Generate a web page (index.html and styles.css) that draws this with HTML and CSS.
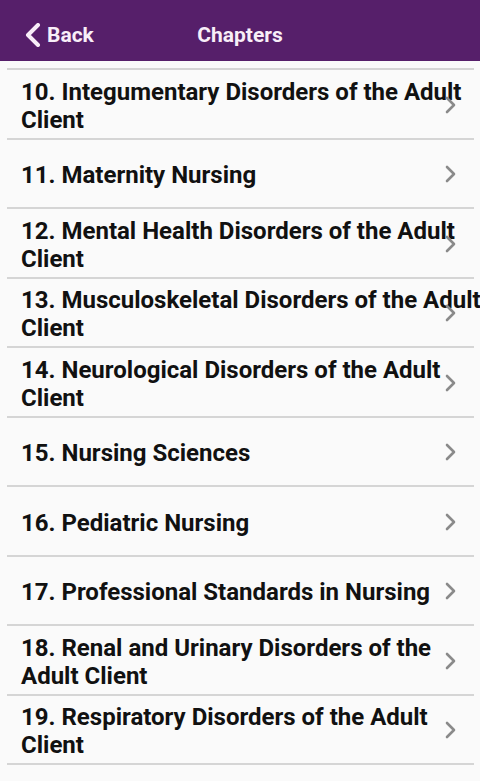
FILE: index.html
```html
<!DOCTYPE html>
<html lang="en">
<head>
<meta charset="utf-8">
<title>Chapters</title>
<link rel="stylesheet" href="styles.css">
</head>
<body>
<header class="topbar">
  <a class="back" href="#">
    <svg class="back-icon" width="16" height="24" viewBox="0 0 16 24"><polyline points="13,2 3,12 13,22" fill="none" stroke="currentColor" stroke-width="4" stroke-linecap="round" stroke-linejoin="round"/></svg>
    <span>Back</span>
  </a>
  <h1 class="title">Chapters</h1>
  <span class="spacer"></span>
</header>
<main class="list-wrap">
  <ul class="chapters">
    <li class="row"><span class="label">10. Integumentary Disorders of the Adult Client</span><svg class="chev" width="12" height="18" viewBox="0 0 12 18"><polyline points="2,2 9,9 2,16" fill="none" stroke="currentColor" stroke-width="2.6" stroke-linecap="round" stroke-linejoin="round"/></svg></li>
    <li class="row"><span class="label">11. Maternity Nursing</span><svg class="chev" width="12" height="18" viewBox="0 0 12 18"><polyline points="2,2 9,9 2,16" fill="none" stroke="currentColor" stroke-width="2.6" stroke-linecap="round" stroke-linejoin="round"/></svg></li>
    <li class="row"><span class="label">12. Mental Health Disorders of the Adult Client</span><svg class="chev" width="12" height="18" viewBox="0 0 12 18"><polyline points="2,2 9,9 2,16" fill="none" stroke="currentColor" stroke-width="2.6" stroke-linecap="round" stroke-linejoin="round"/></svg></li>
    <li class="row"><span class="label">13. Musculoskeletal Disorders of the Adult Client</span><svg class="chev" width="12" height="18" viewBox="0 0 12 18"><polyline points="2,2 9,9 2,16" fill="none" stroke="currentColor" stroke-width="2.6" stroke-linecap="round" stroke-linejoin="round"/></svg></li>
    <li class="row"><span class="label">14. Neurological Disorders of the Adult Client</span><svg class="chev" width="12" height="18" viewBox="0 0 12 18"><polyline points="2,2 9,9 2,16" fill="none" stroke="currentColor" stroke-width="2.6" stroke-linecap="round" stroke-linejoin="round"/></svg></li>
    <li class="row"><span class="label">15. Nursing Sciences</span><svg class="chev" width="12" height="18" viewBox="0 0 12 18"><polyline points="2,2 9,9 2,16" fill="none" stroke="currentColor" stroke-width="2.6" stroke-linecap="round" stroke-linejoin="round"/></svg></li>
    <li class="row"><span class="label">16. Pediatric Nursing</span><svg class="chev" width="12" height="18" viewBox="0 0 12 18"><polyline points="2,2 9,9 2,16" fill="none" stroke="currentColor" stroke-width="2.6" stroke-linecap="round" stroke-linejoin="round"/></svg></li>
    <li class="row"><span class="label">17. Professional Standards in Nursing</span><svg class="chev" width="12" height="18" viewBox="0 0 12 18"><polyline points="2,2 9,9 2,16" fill="none" stroke="currentColor" stroke-width="2.6" stroke-linecap="round" stroke-linejoin="round"/></svg></li>
    <li class="row"><span class="label">18. Renal and Urinary Disorders of the Adult Client</span><svg class="chev" width="12" height="18" viewBox="0 0 12 18"><polyline points="2,2 9,9 2,16" fill="none" stroke="currentColor" stroke-width="2.6" stroke-linecap="round" stroke-linejoin="round"/></svg></li>
    <li class="row"><span class="label">19. Respiratory Disorders of the Adult Client</span><svg class="chev" width="12" height="18" viewBox="0 0 12 18"><polyline points="2,2 9,9 2,16" fill="none" stroke="currentColor" stroke-width="2.6" stroke-linecap="round" stroke-linejoin="round"/></svg></li>
  </ul>
</main>
</body>
</html>
```
FILE: styles.css
```css
* { box-sizing: border-box; }
html, body {
  margin: 0;
  padding: 0;
}
body {
  width: 480px;
  height: 781px;
  overflow: hidden;
  background: #fafafa;
  font-family: Roboto, "Liberation Sans", Arial, sans-serif;
}
.topbar {
  height: 61px;
  background: #561f6a;
  display: grid;
  grid-template-columns: 1fr auto 1fr;
  align-items: center;
  color: #f8eef8;
  padding: 9px 0 0 0;
}
.back {
  display: flex;
  align-items: center;
  gap: 6px;
  padding-left: 25px;
  color: #f8eef8;
  text-decoration: none;
  font-size: 21px;
  font-weight: 700;
}
.back-icon { display: block; }
.title {
  margin: 0;
  font-size: 21px;
  font-weight: 700;
}
.list-wrap {
  padding: 7px 6px 0 7px;
}
.chapters {
  list-style: none;
  margin: 0;
  padding: 0;
  border-bottom: 2px solid #d5d5d5;
}
.row {
  position: relative;
  height: 69.5px;
  border-top: 2px solid #d5d5d5;
  display: flex;
  align-items: center;
  padding: 4px 0 0 14px;
}
.label {
  flex: 1;
  margin-right: -12px;
  font-size: 24px;
  line-height: 28px;
  font-weight: 700;
  color: #111;
}
.chev {
  position: absolute;
  right: 17px;
  top: 50%;
  margin-top: -8px;
  color: #8a8a8a;
}
```
